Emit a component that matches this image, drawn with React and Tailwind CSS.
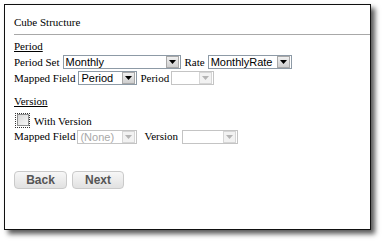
import React from 'react';

function Arrow({ disabled }) {
  return (
    <div className={`ml-auto mr-px h-[12px] w-[13px] flex items-center justify-center border ${disabled ? 'border-[#d6d6d6] bg-[#f2f2f2]' : 'border-[#a8a8a8] bg-gradient-to-b from-[#f0f0f0] to-[#cfcfcf]'}`}>
      <svg width="7" height="4" viewBox="0 0 7 4">
        <path d="M0 0H7L3.5 4Z" fill={disabled ? '#b4b4b4' : '#000'} />
      </svg>
    </div>
  );
}

function Select({ value, width, disabled }) {
  return (
    <div
      className={`h-[14px] flex items-center border bg-white shrink-0 ${disabled ? 'border-[#c4c4c4] text-[#a8a8a8]' : 'border-[#8d9aa6] text-black'}`}
      style={{ width }}
    >
      <span className="pl-[2px] text-[11px] leading-[12px] font-['Liberation_Sans',Arial,sans-serif] whitespace-nowrap">{value}</span>
      <Arrow disabled={disabled} />
    </div>
  );
}

export default function App() {
  return (
    <div className="w-[383px] h-[242px] bg-white pt-[4px] pl-[4px]">
      <div className="w-[367px] h-[226px] border border-[#111] bg-white shadow-[4px_4px_5px_rgba(0,0,0,0.65)] pt-[11px] pl-[9px] font-['Liberation_Serif','Times_New_Roman',serif] text-[11px] leading-[13px] text-black">
        <div className="h-[13px]">Cube Structure</div>
        <div className="mt-[5px] border-t border-[#a8a8a8]" />

        <div className="mt-[5px] h-[13px] underline">Period</div>
        <div className="mt-[2px] h-[14px] flex items-center">
          <span className="mr-[3px]">Period Set</span>
          <Select value="Monthly" width={118} />
          <span className="ml-[4px] mr-[3px]">Rate</span>
          <Select value="MonthlyRate" width={84} />
        </div>
        <div className="mt-[2px] h-[14px] flex items-center">
          <span className="mr-[3px]">Mapped Field</span>
          <Select value="Period" width={59} />
          <span className="ml-[3px] mr-[2px]">Period</span>
          <Select value="" width={43} disabled />
        </div>

        <div className="mt-[10px] h-[13px] underline">Version</div>
        <div className="mt-[4px] h-[16px] flex items-center">
          <div className="ml-px w-[15px] h-[15px] border border-dotted border-[#333] flex items-center justify-center">
            <div className="w-[12px] h-[12px] border border-[#8e8f8f] bg-gradient-to-br from-[#d8d8d8] to-[#f8f8f8]" />
          </div>
          <span className="ml-[4px] mt-[3px]">With Version</span>
        </div>
        <div className="mt-px h-[15px] flex items-center">
          <span className="mr-[2px]">Mapped Field</span>
          <Select value="(None)" width={60} disabled />
          <span className="ml-[7px] mr-[4px]">Version</span>
          <Select value="" width={56} disabled />
        </div>

        <div className="mt-[27px] flex gap-[5px] font-['Liberation_Sans',Arial,sans-serif]">
          <button className="w-[53px] h-[18px] rounded-[4px] border border-[#cacaca] bg-gradient-to-b from-[#f7f7f7] to-[#e1e1e1] text-[12px] font-bold text-[#555] leading-none">Back</button>
          <button className="w-[52px] h-[18px] rounded-[4px] border border-[#cacaca] bg-gradient-to-b from-[#f7f7f7] to-[#e1e1e1] text-[12px] font-bold text-[#555] leading-none">Next</button>
        </div>
      </div>
    </div>
  );
}
